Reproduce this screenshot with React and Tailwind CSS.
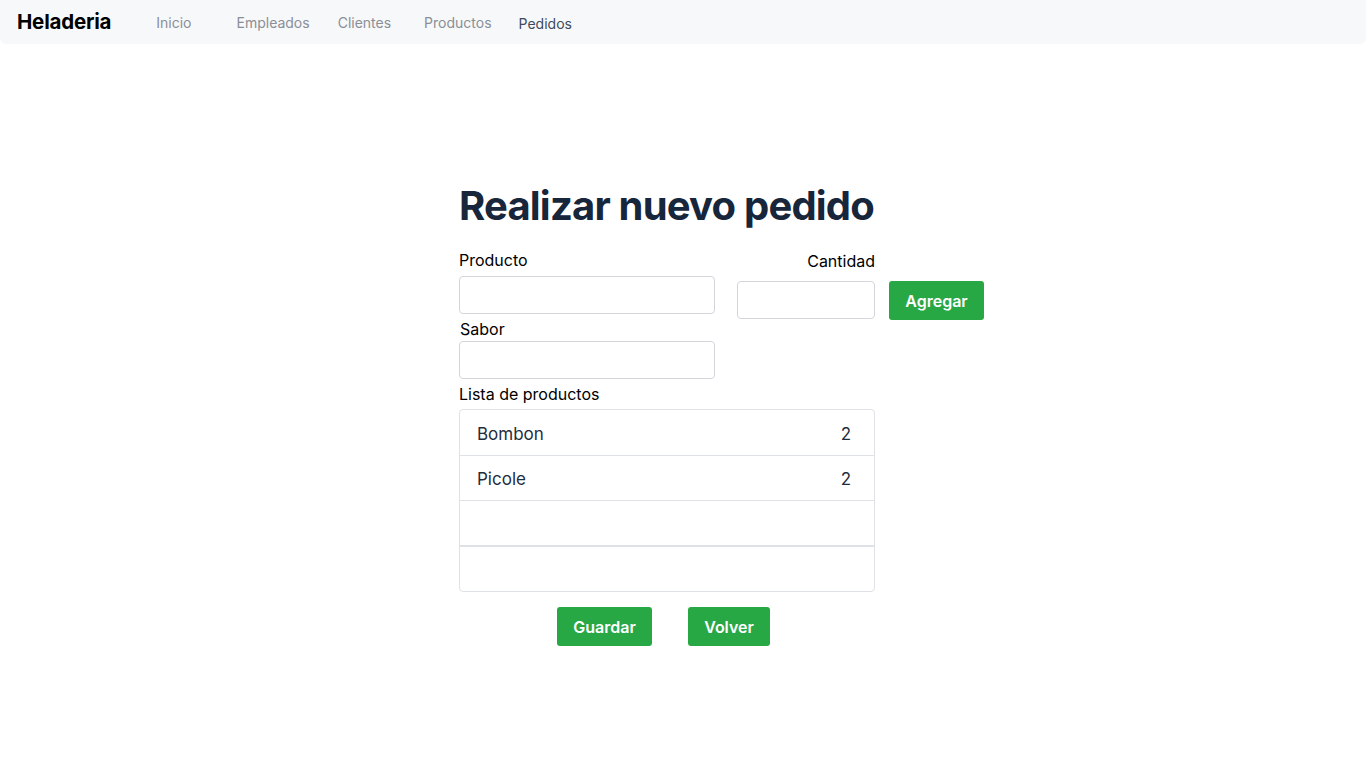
import React from 'react';

const App = () => {
  const items = [
    { name: 'Bombon', qty: 2 },
    { name: 'Picole', qty: 2 },
    { name: '', qty: '' },
    { name: '', qty: '' },
  ];

  return (
    <div className="min-h-screen bg-white" style={{ fontFamily: 'Inter, "Noto Sans", sans-serif' }}>
      {/* Navbar */}
      <nav className="h-[44px] bg-[#f7f8fa] rounded-b-md flex items-center px-[17px]">
        <span className="text-[20.5px] font-bold text-black tracking-[-0.2px]">Heladeria</span>
        <div className="flex items-center text-[14px] ml-[45px]">
          <a className="text-[#8a8f96]">Inicio</a>
          <a className="text-[#8a8f96] ml-[45px]">Empleados</a>
          <a className="text-[#8a8f96] ml-[28px]">Clientes</a>
          <a className="text-[#8a8f96] ml-[33px]">Productos</a>
          <a className="text-[#3d4b5c] ml-[27px] mt-[2px]">Pedidos</a>
        </div>
      </nav>

      <div className="flex justify-center">
        <div className="w-[448px] shrink-0 pt-[138px]">
          <h1 className="text-[40px] leading-[48px] font-bold text-[#17263a] tracking-[-0.8px] whitespace-nowrap">
            Realizar nuevo pedido
          </h1>

          <div className="flex items-start mt-[20px] w-[530px]">
            <div className="flex flex-col w-[256px] shrink-0">
              <label className="text-[16px] leading-[20px] text-black">Producto</label>
              <input className="mt-[6px] h-[38px] border border-[#d2d6dc] rounded-[4px]" />
              <label className="text-[16px] leading-[20px] text-black mt-[5px] ml-[1px]">Sabor</label>
              <input className="mt-[2px] h-[38px] border border-[#d2d6dc] rounded-[4px]" />
            </div>
            <div className="flex flex-col w-[138px] ml-[22px] mt-[1px] shrink-0">
              <label className="text-[16px] leading-[20px] text-black text-right">Cantidad</label>
              <input className="mt-[10px] h-[38px] border border-[#d2d6dc] rounded-[4px]" />
            </div>
            <button className="ml-[14px] mt-[31px] w-[95px] h-[39px] shrink-0 bg-[#28a745] text-white text-[16px] font-semibold rounded-[3px]">
              Agregar
            </button>
          </div>

          <div className="mt-[5px] text-[16px] leading-[20px] text-black">Lista de productos</div>
          <div className="mt-[5px] w-[416px] border border-[#dee2e6] rounded-[4px]">
            {items.map((it, i) => (
              <div
                key={i}
                className={`${i === 3 ? 'h-[46px]' : 'h-[45px]'} flex items-center justify-between px-[17px] pt-[4px] text-[17px] text-[#1f2d3d] ${i > 0 ? 'border-t border-[#dee2e6]' : ''} ${i === 3 ? 'border-t-2' : ''}`}
              >
                <span>{it.name}</span>
                <span className="mr-[6px]">{it.qty}</span>
              </div>
            ))}
          </div>

          <div className="flex mt-[15px] ml-[98px] gap-[36px]">
            <button className="w-[95px] h-[39px] bg-[#28a745] text-white text-[16px] font-semibold rounded-[3px]">
              Guardar
            </button>
            <button className="w-[82px] h-[39px] bg-[#28a745] text-white text-[16px] font-semibold rounded-[3px]">
              Volver
            </button>
          </div>
        </div>
      </div>
    </div>
  );
};

export default App;
